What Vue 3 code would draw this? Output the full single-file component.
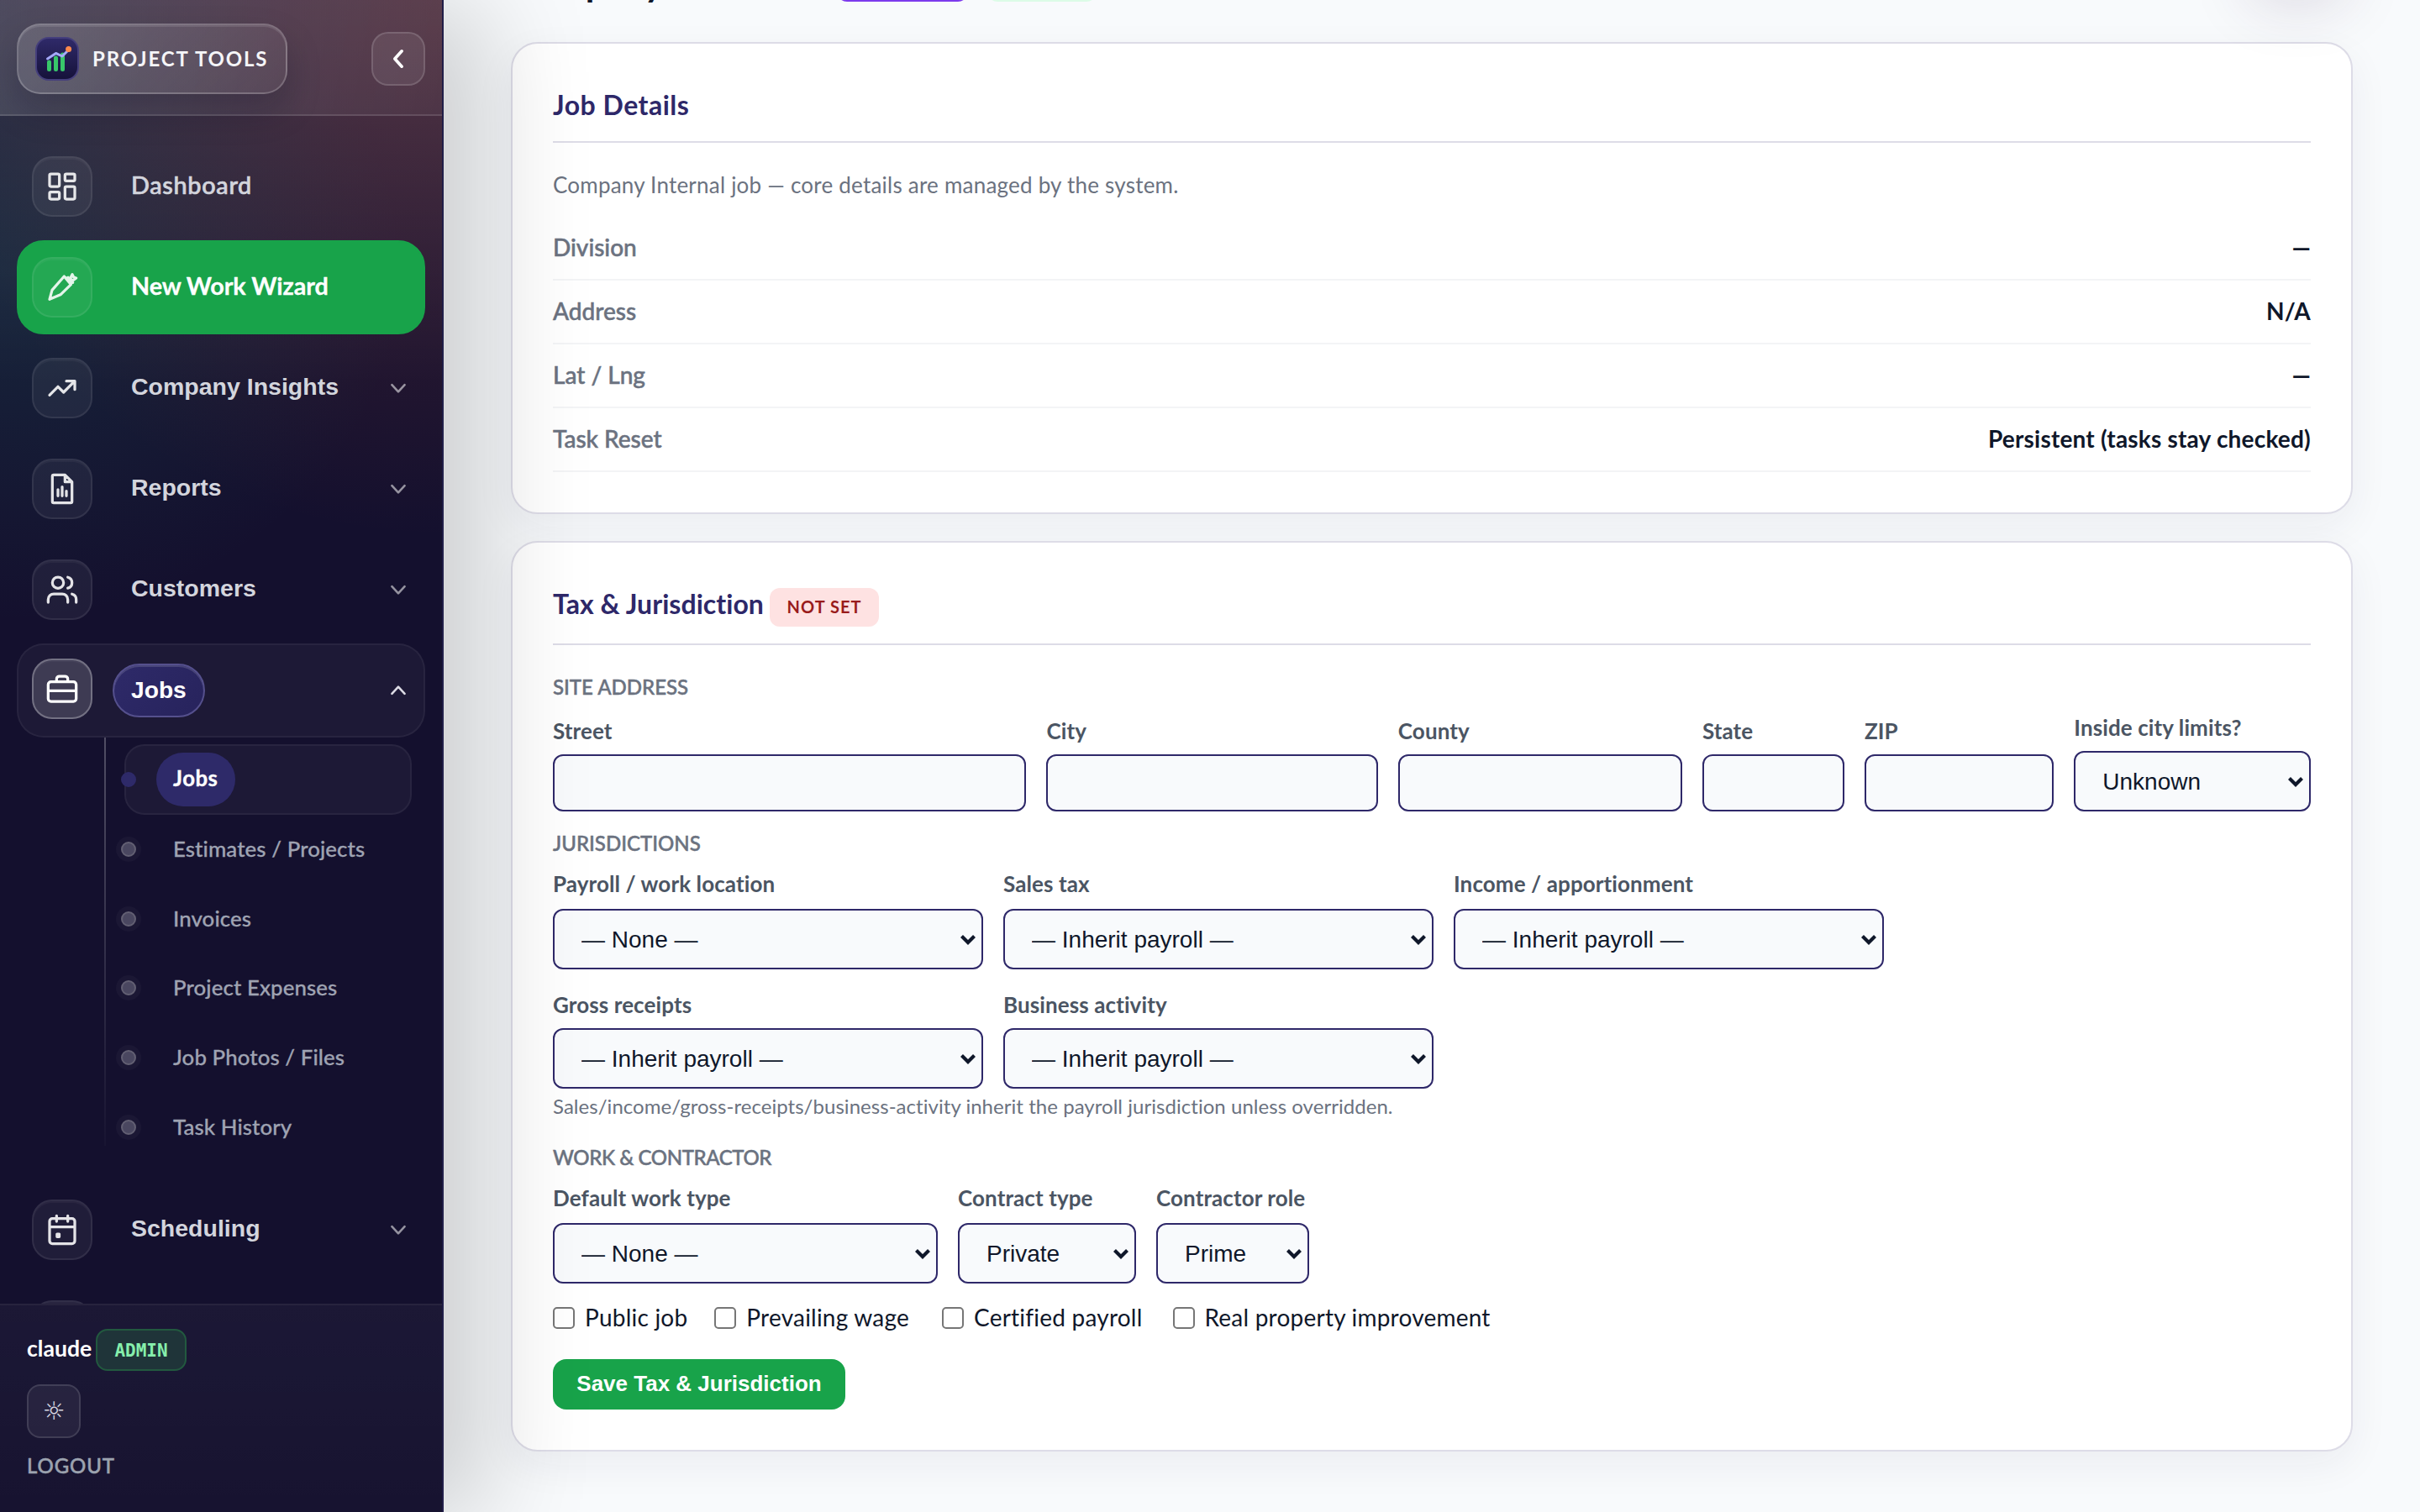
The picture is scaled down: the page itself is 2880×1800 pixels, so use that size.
<script setup>
import { ref } from 'vue'

const navItems = ref([
  { id: 1, label: 'Dashboard', icon: 'dashboard' },
  { id: 2, label: 'New Work Wizard', icon: 'pen', wizard: true },
  { id: 3, label: 'Company Insights', icon: 'trend', group: true },
  { id: 4, label: 'Reports', icon: 'report', group: true },
  { id: 5, label: 'Customers', icon: 'users', group: true },
  {
    id: 6,
    label: 'Jobs',
    icon: 'briefcase',
    group: true,
    open: true,
    children: ['Jobs', 'Estimates / Projects', 'Invoices', 'Project Expenses', 'Job Photos / Files', 'Task History']
  },
  { id: 7, label: 'Scheduling', icon: 'calendar', group: true },
  { id: 8, label: '', icon: '' }
])

const icons = {
  dashboard:
    'M4 3h5a1 1 0 0 1 1 1v7a1 1 0 0 1-1 1H4a1 1 0 0 1-1-1V4a1 1 0 0 1 1-1zM15 3h5a1 1 0 0 1 1 1v3a1 1 0 0 1-1 1h-5a1 1 0 0 1-1-1V4a1 1 0 0 1 1-1zM15 12h5a1 1 0 0 1 1 1v7a1 1 0 0 1-1 1h-5a1 1 0 0 1-1-1v-7a1 1 0 0 1 1-1zM4 16h5a1 1 0 0 1 1 1v3a1 1 0 0 1-1 1H4a1 1 0 0 1-1-1v-3a1 1 0 0 1 1-1z',
  pen: 'M3 20.6L4.800 14 13.400 4.200l4.900 5.800-7.500 7.300zM14.800 5.200l3.600 4M16.200 5l3.400 3.600M17.800 5.600l1.400-2.800 1 2 1.800.6-2.600 2z',
  trend: 'M3 17l6-6 4 4 8-8M15 7h6v6',
  report: 'M14 2H6a1 1 0 0 0-1 1v18a1 1 0 0 0 1 1h12a1 1 0 0 0 1-1V7zM14 2v5h5M9 12.5V17M12 10.5V17M15 13.5V17',
  users:
    'M16 21v-2a4 4 0 0 0-4-4H6a4 4 0 0 0-4 4v2M9 3a4 4 0 1 0 0 8 4 4 0 0 0 0-8M22 21v-2a4 4 0 0 0-3-3.87M16 3.13a4 4 0 0 1 0 7.75',
  briefcase: 'M4 7h16a2 2 0 0 1 2 2v10a2 2 0 0 1-2 2H4a2 2 0 0 1-2-2V9a2 2 0 0 1 2-2zM8 7V5a2 2 0 0 1 2-2h4a2 2 0 0 1 2 2v2M2 13.4h20',
  calendar: 'M5 4h14a2 2 0 0 1 2 2v14a2 2 0 0 1-2 2H5a2 2 0 0 1-2-2V6a2 2 0 0 1 2-2zM3 10h18M8 2v4M16 2v4M8.3 15h1.6v2H8.3z'
}

const details = [
  { label: 'Division', value: '—' },
  { label: 'Address', value: 'N/A' },
  { label: 'Lat / Lng', value: '—' },
  { label: 'Task Reset', value: 'Persistent (tasks stay checked)' }
]

const address = ref([
  { label: 'Street', value: '' },
  { label: 'City', value: '' },
  { label: 'County', value: '' },
  { label: 'State', value: '' },
  { label: 'ZIP', value: '' }
])

const jurisdictions = [
  { label: 'Payroll / work location', value: '— None —', tall: true },
  { label: 'Sales tax', value: '— Inherit payroll —', tall: true },
  { label: 'Income / apportionment', value: '— Inherit payroll —', tall: true },
  { label: 'Gross receipts', value: '— Inherit payroll —' },
  { label: 'Business activity', value: '— Inherit payroll —' }
]

const work = [
  { label: 'Default work type', value: '— None —' },
  { label: 'Contract type', value: 'Private' },
  { label: 'Contractor role', value: 'Prime' }
]

const flags = ref([
  { label: 'Public job', checked: false },
  { label: 'Prevailing wage', checked: false },
  { label: 'Certified payroll', checked: false },
  { label: 'Real property improvement', checked: false }
])
</script>

<template>
  <div class="app">
    <aside class="sidebar">
      <header class="side-head">
        <div class="brand">
          <span class="brand-mark">
            <svg viewBox="0 0 48 48">
              <path d="M14.500 28v8.500M22.500 23v13.500M30.500 19v17.500" stroke="#38c76a" stroke-width="5" stroke-linecap="round" />
              <path d="M12.500 24l10-6.600 7.500 3.600 7.500-7.500" stroke="#a5a9fb" stroke-width="3" stroke-linecap="round" stroke-linejoin="round" />
              <circle cx="37.600" cy="12.600" r="3.500" fill="#ff8a4c" />
            </svg>
          </span>
          <span class="brand-name">PROJECT TOOLS</span>
        </div>
        <button class="collapse">
          <svg viewBox="0 0 24 24"><path d="M14.500 6.500L9.500 12l5 5.500" /></svg>
        </button>
      </header>

      <nav class="nav">
        <template v-for="item in navItems" :key="item.id">
          <div class="nav-item" :class="{ wizard: item.wizard, group: item.group, open: item.open }">
            <span class="nav-icon">
              <svg viewBox="0 0 24 24"><path :d="icons[item.icon]" /></svg>
            </span>
            <span class="nav-label">{{ item.label }}</span>
            <svg v-if="item.group" class="chevron" viewBox="0 0 18 12"><path :d="item.open ? 'M2 10L9 2.500 16 10' : 'M2 2l7 7.500L16 2'" /></svg>
          </div>
          <ul v-if="item.children" class="subnav">
            <li v-for="(child, i) in item.children" :key="child" :class="{ active: i === 0 }">
              <span>{{ child }}</span>
            </li>
          </ul>
        </template>
      </nav>

      <footer class="side-foot">
        <div class="user">
          <span class="user-name">claude</span>
          <span class="role">ADMIN</span>
        </div>
        <button class="theme">☼</button>
        <a class="logout">LOGOUT</a>
      </footer>
    </aside>

    <main class="main">
      <div class="page-head">
        <h1>Company</h1>
        <span class="tag purple"></span>
        <span class="tag green"></span>
        <span class="head-action"></span>
      </div>

      <section class="card">
        <h2>Job Details</h2>
        <p class="note">Company Internal job — core details are managed by the system.</p>
        <div v-for="row in details" :key="row.label" class="detail">
          <span>{{ row.label }}</span>
          <strong :class="{ empty: row.value === '—' }">{{ row.value }}</strong>
        </div>
      </section>

      <section class="card">
        <h2 class="with-badge">
          <span class="tax-title">Tax &amp; Jurisdiction</span>
          <span class="badge">NOT SET</span>
        </h2>

        <h3 class="site">SITE ADDRESS</h3>
        <div class="grid address">
          <label v-for="field in address" :key="field.label" class="field">
            <span>{{ field.label }}</span>
            <input type="text" v-model="field.value" />
          </label>
          <label class="field">
            <span>Inside city limits?</span>
            <div class="select">
              <select><option>Unknown</option></select>
              <svg viewBox="0 0 20 14"><path d="M2.500 2.500L10 10l7.500-7.500" /></svg>
            </div>
          </label>
        </div>

        <h3 class="jur">JURISDICTIONS</h3>
        <div class="grid thirds">
          <label v-for="field in jurisdictions" :key="field.label" class="field" :class="{ tall: field.tall }">
            <span>{{ field.label }}</span>
            <div class="select">
              <select><option>{{ field.value }}</option></select>
              <svg viewBox="0 0 20 14"><path d="M2.500 2.500L10 10l7.500-7.500" /></svg>
            </div>
          </label>
        </div>
        <p class="help">Sales/income/gross-receipts/business-activity inherit the payroll jurisdiction unless overridden.</p>

        <h3 class="wrk">WORK &amp; CONTRACTOR</h3>
        <div class="grid work">
          <label v-for="field in work" :key="field.label" class="field tall">
            <span>{{ field.label }}</span>
            <div class="select">
              <select><option>{{ field.value }}</option></select>
              <svg viewBox="0 0 20 14"><path d="M2.500 2.500L10 10l7.500-7.500" /></svg>
            </div>
          </label>
        </div>

        <div class="flags">
          <label v-for="flag in flags" :key="flag.label">
            <input type="checkbox" v-model="flag.checked" />
            <span>{{ flag.label }}</span>
          </label>
        </div>
        <button class="save">Save Tax &amp; Jurisdiction</button>
      </section>
    </main>
  </div>
</template>

<style>
body {
  background: #f8fafc;
  overflow: hidden;
}
</style>

<style scoped>
* {
  box-sizing: border-box;
}
.app {
  display: flex;
  width: 2880px;
  height: 1800px;
  overflow: hidden;
  font-family: Lato, 'Liberation Sans', sans-serif;
  font-variant-ligatures: none;
  color: #0f172a;
}
svg {
  fill: none;
  display: block;
}
button {
  padding: 0;
}

/* sidebar */
.sidebar {
  position: relative;
  z-index: 2;
  display: flex;
  flex-direction: column;
  flex: none;
  width: 528px;
  height: 1800px;
  border-right: 2px solid #211e48;
  background:
    radial-gradient(circle 640px at 100% 0, rgba(240, 100, 70, 0.2), transparent),
    radial-gradient(ellipse 480px 420px at 0 320px, rgba(40, 150, 130, 0.16), transparent),
    linear-gradient(180deg, rgba(255, 255, 255, 0.11), transparent 460px),
    #14102e;
  box-shadow: 48px 8px 120px rgba(0, 0, 0, 0.18);
}
.side-head {
  display: flex;
  align-items: center;
  justify-content: space-between;
  height: 138px;
  padding: 0 20px;
  border-bottom: 2px solid rgba(255, 255, 255, 0.12);
  background: linear-gradient(100deg, rgba(255, 255, 255, 0.13), rgba(255, 255, 255, 0.04));
}
.brand {
  display: flex;
  align-items: center;
  gap: 16px;
  width: 322px;
  height: 84px;
  margin-top: 4px;
  padding-left: 20px;
  border: 2px solid rgba(255, 255, 255, 0.2);
  border-radius: 28px;
  background: linear-gradient(135deg, rgba(255, 255, 255, 0.14), rgba(255, 255, 255, 0.05));
  box-shadow: 0 20px 40px rgba(10, 10, 30, 0.22), inset 0 2px 0 rgba(255, 255, 255, 0.1);
}
.brand-mark {
  width: 52px;
  height: 52px;
  border: 2px solid #453f7c;
  border-radius: 16px;
  background: linear-gradient(180deg, #2f2a69, #16123a);
}
.brand-name {
  margin-top: -2px;
  font-size: 24px;
  font-weight: 700;
  letter-spacing: 1.850px;
  color: #f5f5f8;
}
.collapse {
  width: 64px;
  height: 64px;
  margin-top: 4px;
  border: 2px solid rgba(255, 255, 255, 0.14);
  border-radius: 20px;
  background: rgba(255, 255, 255, 0.08);
}
.collapse svg {
  width: 40px;
  margin: 0 auto;
  stroke: #fff;
  stroke-width: 2.200;
  stroke-linecap: round;
  stroke-linejoin: round;
}
.nav {
  flex: 1;
  min-height: 0;
  overflow: hidden;
  padding: 28px 20px 0;
}
.nav-item {
  display: flex;
  align-items: center;
  height: 112px;
  margin-bottom: 8px;
  padding: 0 20px 0 16px;
  border: 2px solid transparent;
  border-radius: 32px;
  color: #d3d5dd;
}
.nav-icon {
  flex: none;
  width: 72px;
  height: 72px;
  padding: 14px;
  border: 2px solid rgba(255, 255, 255, 0.08);
  border-radius: 24px;
  background: rgba(255, 255, 255, 0.055);
  box-shadow: inset 0 2px 0 rgba(255, 255, 255, 0.04);
}
.nav-icon svg {
  width: 40px;
  height: 40px;
  stroke: #fff;
  stroke-opacity: 0.88;
  stroke-width: 1.950;
  stroke-linecap: round;
  stroke-linejoin: round;
}
.nav-label {
  margin-left: 46px;
  margin-bottom: 4px;
  font-size: 28.800px;
  font-weight: 500;
  letter-spacing: 0.700px;
  -webkit-text-stroke: 0.700px;
}
.group .nav-label {
  margin-bottom: 3px;
  font-family: 'Liberation Sans', sans-serif;
  font-size: 28.500px;
  font-weight: 700;
  letter-spacing: 0;
  -webkit-text-stroke: 0;
}
.chevron {
  width: 20px;
  height: 13px;
  margin-left: auto;
  stroke: rgba(255, 255, 255, 0.55);
  stroke-width: 2.400;
  stroke-linecap: round;
  stroke-linejoin: round;
}
.wizard {
  border-color: #18a34a;
  background: #18a34a;
  color: #fff;
}
.wizard .nav-label {
  font-weight: 700;
  letter-spacing: -0.100px;
  -webkit-text-stroke: 0.300px;
}
.open {
  margin-bottom: 0;
  border-color: rgba(255, 255, 255, 0.05);
  background: rgba(255, 255, 255, 0.04);
}
.open .nav-icon {
  margin-bottom: 4px;
  border-color: rgba(255, 255, 255, 0.28);
  background: rgba(255, 255, 255, 0.15);
}
.open .nav-icon svg {
  stroke-opacity: 1;
}
.open .nav-label {
  height: 64px;
  margin-left: 24px;
  margin-bottom: 0;
  padding: 0 20px;
  border: 2px solid #55508d;
  border-radius: 32px;
  background: linear-gradient(135deg, #2e2a69, #27235c);
  box-shadow: inset 0 2px 0 rgba(255, 255, 255, 0.14);
  font-size: 28.200px;
  line-height: 58px;
  color: #fff;
}
.open .chevron {
  margin-bottom: 2px;
  stroke: #dcdbe4;
}
.subnav {
  height: 486px;
  margin: 0 0 44px 104px;
  padding: 8px 16px 0 22px;
  border-left: 2px solid;
  border-image: linear-gradient(180deg, rgba(255, 255, 255, 0.26), rgba(255, 255, 255, 0.02)) 1;
  list-style: none;
}
.subnav li {
  position: relative;
  display: flex;
  align-items: center;
  height: 84px;
  margin-bottom: -1.200px;
  padding-left: 36px;
  border: 2px solid transparent;
  border-radius: 24px;
  font-size: 25.800px;
  font-weight: 500;
  letter-spacing: 0.100px;
  -webkit-text-stroke: 0.300px;
  color: #9fa3b2;
}
.subnav li span {
  padding: 0 20px 2px;
}
.subnav li::before {
  content: '';
  position: absolute;
  left: -6px;
  top: 31px;
  width: 14px;
  height: 14px;
  border: 2px solid #636073;
  border-radius: 50%;
  background: #4a4760;
  box-shadow: 0 0 0 6px rgba(255, 255, 255, 0.03);
}
.subnav .active {
  border-color: rgba(255, 255, 255, 0.05);
  background: rgba(255, 255, 255, 0.04);
  color: #fff;
  font-weight: 700;
}
.subnav .active span {
  width: 94px;
  height: 64px;
  border-radius: 32px;
  background: #2e2a69;
  line-height: 61px;
  letter-spacing: 0.500px;
}
.subnav .active::before {
  border-color: #2e2a69;
  background: #2e2a69;
  box-shadow: none;
}
.side-foot {
  height: 248px;
  padding: 28px 32px 0;
  border-top: 2px solid rgba(255, 255, 255, 0.07);
  background: linear-gradient(180deg, rgba(255, 255, 255, 0.035), rgba(255, 255, 255, 0.01));
}
.user {
  display: flex;
  height: 50px;
}
.user-name {
  width: 82px;
  font-size: 26.600px;
  font-weight: 700;
  line-height: 46px;
  color: #fff;
}
.role {
  width: 108px;
  height: 50px;
  border: 2px solid #22593f;
  border-radius: 14px;
  background: #1f3439;
  font: 700 21px/48px 'DejaVu Sans Mono', monospace;
  text-align: center;
  color: #86efac;
}
.theme {
  display: block;
  width: 64px;
  height: 64px;
  margin-top: 16px;
  border: 2px solid rgba(255, 255, 255, 0.12);
  border-radius: 16px;
  background: rgba(255, 255, 255, 0.06);
  font: 30px/56px 'DejaVu Sans', sans-serif;
  color: #d5d6e0;
}
.logout {
  display: block;
  margin-top: 17px;
  font-size: 24px;
  font-weight: 500;
  line-height: 32px;
  letter-spacing: 0.900px;
  -webkit-text-stroke: 0.500px;
  color: #9ca3af;
}

/* page */
.main {
  flex: 1;
  padding: 0 80px;
  overflow: hidden;
}
.page-head {
  display: flex;
  align-items: flex-end;
  height: 80px;
  margin-top: -78px;
  margin-bottom: 48px;
}
.page-head h1 {
  width: 394px;
  margin: 0 0 -4px;
  font-size: 43px;
  font-weight: 700;
  line-height: 52px;
}
.tag {
  height: 40px;
  border-radius: 12px;
}
.purple {
  width: 156px;
  margin-left: -6px;
  background: #7c3aed;
}
.green {
  width: 130px;
  margin-left: 23px;
  background: #dcfce7;
}
.head-action {
  width: 120px;
  height: 60px;
  margin: 0 6px 20px auto;
  border-radius: 30px;
  box-shadow: 0 20px 70px rgba(60, 30, 80, 0.17);
}
.card {
  margin-bottom: 32px;
  padding: 48px;
  border: 2px solid #dddce7;
  border-radius: 32px;
  background: #fff;
  box-shadow: 0 16px 48px rgba(30, 27, 75, 0.06);
}
h2 {
  height: 70px;
  margin: 0;
  border-bottom: 2px solid #dddce7;
  font-size: 32px;
  font-weight: 700;
  line-height: 49px;
  letter-spacing: 0.500px;
  color: #2e2869;
}
.with-badge {
  display: flex;
  height: 74px;
}
.tax-title {
  width: 258px;
  letter-spacing: 0.050px;
  white-space: nowrap;
}
.badge {
  width: 130px;
  height: 46px;
  margin-top: 6px;
  border-radius: 12px;
  background: #fee2e2;
  font-size: 20px;
  font-weight: 700;
  line-height: 45px;
  text-align: center;
  letter-spacing: 1px;
  color: #991b1b;
}
.note {
  margin: 32px 0 20px;
  font-size: 26px;
  line-height: 37px;
  height: 36px;
  letter-spacing: 0.220px;
  color: #6b7280;
}
.detail {
  display: flex;
  justify-content: space-between;
  height: 76px;
  border-bottom: 2px solid #f3f4f6;
  font-size: 28px;
  line-height: 72px;
}
.detail span {
  font-weight: 500;
  -webkit-text-stroke: 0.500px;
  color: #6b7280;
}
.detail strong {
  font-weight: 700;
  letter-spacing: 0.200px;
}
.detail .empty {
  font-weight: 900;
}
h3 {
  height: 30px;
  margin: 0 0 18px;
  font-size: 24px;
  font-weight: 500;
  line-height: 31px;
  -webkit-text-stroke: 0.500px;
  color: #6b7280;
}
.site {
  margin-top: 34px;
}
.jur {
  margin-top: 22px;
}
.wrk {
  margin-top: 30px;
  letter-spacing: -0.400px;
}
.grid {
  display: grid;
  align-items: end;
  column-gap: 24px;
}
.address {
  grid-template-columns: 2fr 1.4fr 1.2fr 0.6fr 0.8fr 1fr;
}
.thirds {
  grid-template-columns: repeat(3, 512px);
  row-gap: 26px;
}
.work {
  grid-template-columns: 458px 212px 182px;
}
.field {
  display: flex;
  flex-direction: column;
  gap: 12px;
  min-width: 0;
  font-size: 26px;
  font-weight: 700;
  line-height: 32px;
  letter-spacing: 0.100px;
  color: #4b5563;
  white-space: nowrap;
}
.tall {
  gap: 14px;
}
.field input,
select {
  width: 100%;
  height: 68px;
  border: 2px solid #2e2869;
  border-radius: 12px;
  background: #f8fafc;
  color: #0f172a;
}
select {
  display: block;
  height: 72px;
  padding: 0 32px;
  font: 28px 'Liberation Sans', sans-serif;
  appearance: none;
}
.select {
  position: relative;
}
.select svg {
  position: absolute;
  right: 8px;
  top: 30px;
  width: 20px;
  height: 14px;
  stroke: #0f172a;
  stroke-width: 4.200;
}
.help {
  margin: 6px 0 0;
  font-size: 24px;
  line-height: 30px;
  letter-spacing: 0.040px;
  color: #6b7280;
}
.flags {
  display: flex;
  height: 36px;
  margin-top: 23px;
  font-size: 28px;
  letter-spacing: 0.220px;
}
.flags label {
  display: flex;
  align-items: center;
  gap: 12px;
  margin-right: 36px;
}
.flags label:first-child {
  margin-right: 32px;
}
.flags label:nth-child(2) {
  margin-right: 39px;
}
.flags span {
  margin-top: -2px;
}
.flags input {
  width: 26px;
  height: 26px;
  margin: 0;
  border: 2px solid #767676;
  border-radius: 5px;
  background: #fff;
  appearance: none;
}
.save {
  display: block;
  width: 348px;
  height: 60px;
  margin-top: 31px;
  padding-bottom: 2px;
  border: 0;
  border-radius: 16px;
  background: #18a34a;
  font: 700 26px 'Liberation Sans', sans-serif;
  color: #fff;
}
</style>
